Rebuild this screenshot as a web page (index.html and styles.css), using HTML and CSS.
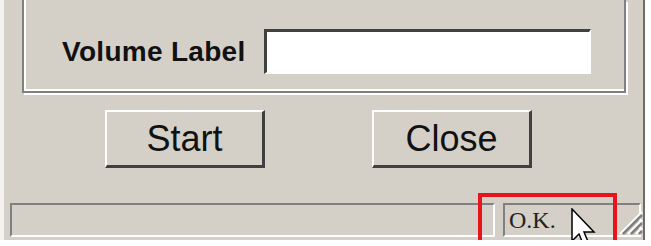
FILE: index.html
```html
<!DOCTYPE html>
<html lang="en">
<head>
    <meta charset="UTF-8">
    <title>Format</title>
    <link rel="stylesheet" href="styles.css">
</head>
<body>

<div class="window">
    <!-- Options group -->
    <div class="group">
        <div class="field-row">
            <label class="field-label" for="volume">Volume Label</label>
            <input class="field-input" id="volume" type="text">
        </div>
    </div>

    <!-- Buttons -->
    <div class="buttons">
        <button class="btn">Start</button>
        <button class="btn">Close</button>
    </div>

    <!-- Status bar -->
    <div class="statusbar">
        <div class="panel panel-main"></div>
        <div class="panel panel-status">O.K.</div>
        <div class="grip">
            <svg width="26" height="26" viewBox="0 0 26 26">
                <path d="M25 3 L3 25 M25 11 L11 25 M25 19 L19 25" stroke="#fff" stroke-width="2"/>
                <path d="M25 6 L6 25 M25 14 L14 25 M25 22 L22 25" stroke="#808080" stroke-width="2.5"/>
            </svg>
        </div>
        <div class="highlight"></div>
        <svg class="cursor" width="28" height="40" viewBox="0 0 28 40">
            <path d="M2 1 L2 33 L9 26 L14 38 L19 36 L14 24 L24 24 Z" fill="#fff" stroke="#000" stroke-width="1.5"/>
        </svg>
    </div>
</div>

</body>
</html>
```

FILE: styles.css
```css
body {
    margin: 0;
    padding: 0;
    background: #fff;
    font-family: "Liberation Sans", Arial, sans-serif;
}

.window {
    width: 645px;
    height: 240px;
    background: #d4d0c8;
    border-left: 4px solid #f4f3ef;
    border-right: 2px solid #6e6c66;
    box-sizing: border-box;
    display: flex;
    flex-direction: column;
    position: relative;
}

.group {
    margin-left: 18px;
    width: 604px;
    height: 93px;
    box-sizing: border-box;
    border-left: 2px solid #808080;
    border-bottom: 2px solid #808080;
    border-right: 2px solid #808080;
    box-shadow: inset 2px 0 0 #fff, inset 0 -2px 0 #fff, 2px 2px 0 #fff;
    display: flex;
    align-items: center;
}

.field-row {
    display: flex;
    align-items: center;
    gap: 18px;
    margin-left: 38px;
    margin-top: 12px;
}

.field-label {
    font-weight: bold;
    font-size: 28px;
    letter-spacing: 0.3px;
    color: #111;
}

.field-input {
    width: 327px;
    height: 45px;
    box-sizing: border-box;
    border-style: solid;
    border-width: 3px 2px 2px 3px;
    border-color: #404040 #fff #fff #404040;
    background: #fff;
}

.buttons {
    display: flex;
    gap: 107px;
    margin: 17px 0 0 101px;
}

.btn {
    width: 160px;
    height: 58px;
    padding: 0;
    background: #d4d0c8;
    font-family: "Liberation Sans", Arial, sans-serif;
    font-size: 36px;
    color: #111;
    border-style: solid;
    border-width: 2px 3px 3px 2px;
    border-color: #fff #404040 #404040 #fff;
}

.statusbar {
    margin-top: auto;
    margin-bottom: 3px;
    height: 34px;
    display: flex;
    align-items: stretch;
    gap: 8px;
    padding-left: 6px;
    position: relative;
}

.panel {
    box-sizing: border-box;
    border-style: solid;
    border-width: 2px;
    border-color: #808080 #fff #fff #808080;
}

.panel-main {
    width: 485px;
}

.panel-status {
    width: 138px;
    font-family: "Liberation Serif", "Times New Roman", serif;
    font-size: 24px;
    padding: 2px 0 0 4px;
    color: #222;
}

.grip {
    position: absolute;
    right: 0;
    bottom: -2px;
}

.highlight {
    position: absolute;
    left: 474px;
    top: -10px;
    width: 131px;
    height: 43px;
    border: 4px solid #e8141c;
}

.cursor {
    position: absolute;
    left: 566px;
    top: 5px;
}
```
